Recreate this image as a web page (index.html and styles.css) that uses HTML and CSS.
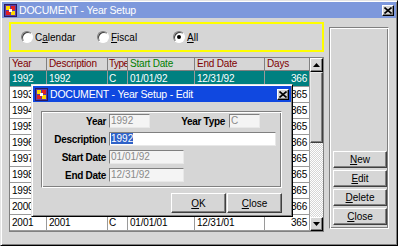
FILE: index.html
```html
<!DOCTYPE html>
<html lang="en">
<head>
    <meta charset="UTF-8">
    <title>DOCUMENT - Year Setup</title>
    <link rel="stylesheet" href="styles.css">
</head>
<body>
    <div class="window">
        <div class="titlebar inactive">
            <svg class="app-icon" width="13" height="13" viewBox="0 0 13 13">
                <rect x="0.5" y="0.5" width="12" height="12" fill="#5a3ca8" stroke="#2a1a60"/>
                <rect x="2" y="2" width="4" height="4" fill="#ffd800"/>
                <rect x="7" y="2" width="4" height="4" fill="#e02020"/>
                <rect x="2" y="7" width="4" height="4" fill="#e02020"/>
                <rect x="7" y="7" width="4" height="4" fill="#ffd800"/>
                <rect x="5" y="5" width="3" height="3" fill="#ffffff"/>
            </svg>
            <span class="title">DOCUMENT - Year Setup</span>
            <span class="close-btn">
                <svg width="8" height="7" viewBox="0 0 8 7"><path d="M0.5 0.5 L7.5 6.5 M7.5 0.5 L0.5 6.5" stroke="#000" stroke-width="1.6"/></svg>
            </span>
        </div>

        <div class="content">
            <div class="left">
                <div class="filter">
                    <div class="radio"><span class="circle"></span><span>C<u>a</u>lendar</span></div>
                    <div class="radio"><span class="circle"></span><span><u>F</u>iscal</span></div>
                    <div class="radio"><span class="circle checked"></span><span><u>A</u>ll</span></div>
                </div>

                <div class="grid-wrap">
                    <div class="grid">
                        <div class="cell head">Year</div>
                        <div class="cell head">Description</div>
                        <div class="cell head tight">Type</div>
                        <div class="cell head green">Start Date</div>
                        <div class="cell head">End Date</div>
                        <div class="cell head">Days</div>

                        <div class="cell sel">1992</div><div class="cell sel">1992</div><div class="cell sel tight">C</div><div class="cell sel">01/01/92</div><div class="cell sel">12/31/92</div><div class="cell sel num">366</div>
                        <div class="cell">1993</div><div class="cell">1993</div><div class="cell tight">C</div><div class="cell">01/01/93</div><div class="cell">12/31/93</div><div class="cell num">365</div>
                        <div class="cell">1994</div><div class="cell">1994</div><div class="cell tight">C</div><div class="cell">01/01/94</div><div class="cell">12/31/94</div><div class="cell num">365</div>
                        <div class="cell">1995</div><div class="cell">1995</div><div class="cell tight">C</div><div class="cell">01/01/95</div><div class="cell">12/31/95</div><div class="cell num">365</div>
                        <div class="cell">1996</div><div class="cell">1996</div><div class="cell tight">C</div><div class="cell">01/01/96</div><div class="cell">12/31/96</div><div class="cell num">366</div>
                        <div class="cell">1997</div><div class="cell">1997</div><div class="cell tight">C</div><div class="cell">01/01/97</div><div class="cell">12/31/97</div><div class="cell num">365</div>
                        <div class="cell">1998</div><div class="cell">1998</div><div class="cell tight">C</div><div class="cell">01/01/98</div><div class="cell">12/31/98</div><div class="cell num">365</div>
                        <div class="cell">1999</div><div class="cell">1999</div><div class="cell tight">C</div><div class="cell">01/01/99</div><div class="cell">12/31/99</div><div class="cell num">365</div>
                        <div class="cell">2000</div><div class="cell">2000</div><div class="cell tight">C</div><div class="cell">01/01/00</div><div class="cell">12/31/00</div><div class="cell num">366</div>
                        <div class="cell">2001</div><div class="cell">2001</div><div class="cell tight">C</div><div class="cell">01/01/01</div><div class="cell">12/31/01</div><div class="cell num">365</div>
                    </div>
                    <div class="scrollbar">
                        <div class="sb-btn"><svg width="7" height="4" viewBox="0 0 7 4"><path d="M3.5 0 L7 4 L0 4 Z" fill="#000"/></svg></div>
                        <div class="sb-thumb"></div>
                        <div class="sb-track"></div>
                        <div class="sb-btn"><svg width="7" height="4" viewBox="0 0 7 4"><path d="M0 0 L7 0 L3.5 4 Z" fill="#000"/></svg></div>
                    </div>
                </div>
            </div>

            <div class="side">
                <button class="btn"><u>N</u>ew</button>
                <button class="btn"><u>E</u>dit</button>
                <button class="btn"><u>D</u>elete</button>
                <button class="btn"><u>C</u>lose</button>
            </div>
        </div>

        <div class="dialog">
            <div class="titlebar active">
                <svg class="app-icon" width="13" height="13" viewBox="0 0 13 13">
                    <rect x="0.5" y="0.5" width="12" height="12" fill="#5a3ca8" stroke="#2a1a60"/>
                    <rect x="2" y="2" width="4" height="4" fill="#ffd800"/>
                    <rect x="7" y="2" width="4" height="4" fill="#e02020"/>
                    <rect x="2" y="7" width="4" height="4" fill="#e02020"/>
                    <rect x="7" y="7" width="4" height="4" fill="#ffd800"/>
                    <rect x="5" y="5" width="3" height="3" fill="#ffffff"/>
                </svg>
                <span class="title">DOCUMENT - Year Setup - Edit</span>
                <span class="close-btn">
                    <svg width="8" height="7" viewBox="0 0 8 7"><path d="M0.5 0.5 L7.5 6.5 M7.5 0.5 L0.5 6.5" stroke="#000" stroke-width="1.6"/></svg>
                </span>
            </div>
            <div class="dialog-body">
                <div class="group">
                    <div class="field">
                        <span class="label">Year</span>
                        <span class="input w-year disabled">1992</span>
                        <span class="label type-label">Year Type</span>
                        <span class="input w-type disabled">C</span>
                    </div>
                    <div class="field">
                        <span class="label">Description</span>
                        <span class="input w-desc"><span class="selected">1992</span></span>
                    </div>
                    <div class="field">
                        <span class="label">Start Date</span>
                        <span class="input w-date disabled">01/01/92</span>
                    </div>
                    <div class="field">
                        <span class="label">End Date</span>
                        <span class="input w-date disabled">12/31/92</span>
                    </div>
                </div>
                <div class="dialog-buttons">
                    <button class="btn wide"><u>O</u>K</button>
                    <button class="btn wide"><u>C</u>lose</button>
                </div>
            </div>
        </div>
    </div>
</body>
</html>
```

FILE: styles.css
```css
* {
    box-sizing: border-box;
}

body {
    margin: 0;
    font-family: "Liberation Sans", Arial, sans-serif;
    font-size: 10px;
    color: #000;
    background: #d6d6d6;
}

.window {
    position: relative;
    width: 398px;
    height: 246px;
    background: #d6d6d6;
    border: 1px solid;
    border-color: #e4e4e4 #000 #000 #e4e4e4;
    box-shadow: inset 1px 1px #fff, inset -1px -1px #808080;
    padding: 1px;
}

.titlebar {
    height: 16px;
    display: flex;
    align-items: center;
    padding: 0 2px;
    gap: 2px;
    color: #fff;
    font-size: 10.5px;
    letter-spacing: -0.2px;
}

.titlebar.inactive {
    background: #7d98dc;
}

.titlebar.active {
    background: #1048e0;
}

.app-icon {
    flex: none;
}

.close-btn {
    margin-left: auto;
    width: 12px;
    height: 11px;
    background: #d6d6d6;
    border: 1px solid;
    border-color: #fff #000 #000 #fff;
    box-shadow: inset -1px -1px #808080;
    display: flex;
    align-items: center;
    justify-content: center;
}

.content {
    display: flex;
    padding-left: 7px;
}

.left {
    width: 315px;
    padding-top: 4px;
}

.filter {
    height: 30px;
    border: 2px solid #ffff00;
    display: flex;
    align-items: center;
    padding-left: 10px;
}

.radio {
    width: 76px;
    display: flex;
    align-items: center;
    gap: 2px;
}

.circle {
    width: 12px;
    height: 12px;
    border-radius: 50%;
    background: #fff;
    border: 1px solid;
    border-color: #808080 #fff #fff #808080;
    box-shadow: inset 1px 1px #404040;
    position: relative;
}

.circle.checked::after {
    content: "";
    position: absolute;
    left: 3px;
    top: 3px;
    width: 4px;
    height: 4px;
    border-radius: 50%;
    background: #000;
}

.grid-wrap {
    margin-top: 5px;
    height: 175px;
    display: flex;
    border: 1px solid #808080;
    background: #fff;
}

.grid {
    width: 300px;
    display: grid;
    grid-template-columns: 37px 61px 20px 67px 70px 45px;
    grid-template-rows: 13px repeat(10, 16px);
    align-content: start;
}

.cell {
    border-right: 1px solid #9a9a9a;
    border-bottom: 1px solid #9a9a9a;
    padding: 0 2px;
    line-height: 15px;
    white-space: nowrap;
    overflow: hidden;
    letter-spacing: -0.2px;
}

.cell.tight {
    padding: 0 0 0 1px;
    letter-spacing: -0.5px;
}

.cell.head {
    background: #d6d6d6;
    color: #800000;
    line-height: 12px;
    border-color: #808080;
}

.cell.head.green {
    color: #008000;
}

.cell.sel {
    background: #008080;
    color: #fff;
}

.cell.num {
    text-align: right;
}

.scrollbar {
    width: 14px;
    display: flex;
    flex-direction: column;
}

.sb-btn {
    height: 14px;
    background: #d6d6d6;
    border: 1px solid;
    border-color: #fff #000 #000 #fff;
    box-shadow: inset -1px -1px #808080;
    display: flex;
    align-items: center;
    justify-content: center;
}

.sb-thumb {
    height: 71px;
    background: #d6d6d6;
    border: 1px solid;
    border-color: #e8e8e8 #404040 #404040 #e8e8e8;
    box-shadow: inset -1px -1px #808080;
}

.sb-track {
    flex: 1;
    background: repeating-conic-gradient(#fff 0 25%, #d6d6d6 0 50%) 0 0 / 2px 2px;
}

.side {
    width: 60px;
    height: 202px;
    margin: 9px 0 0 5px;
    border: 1px solid;
    border-color: #808080 #fff #fff #808080;
    box-shadow: inset 1px 1px #fff, inset -1px -1px #808080;
    display: flex;
    flex-direction: column;
    justify-content: flex-end;
    gap: 2px;
    padding: 0 0 3px 3px;
}

.btn {
    font-family: "Liberation Sans", Arial, sans-serif;
    font-size: 10px;
    color: #000;
    background: #d6d6d6;
    border: 1px solid;
    border-color: #fff #404040 #404040 #fff;
    box-shadow: inset -1px -1px #808080;
    padding: 0;
    width: 54px;
    height: 17px;
}

.btn.wide {
    width: 55px;
    height: 20px;
}

.dialog {
    position: absolute;
    left: 30px;
    top: 83px;
    width: 262px;
    height: 133px;
    background: #d6d6d6;
    border: 1px solid;
    border-color: #e4e4e4 #000 #000 #e4e4e4;
    box-shadow: inset 1px 1px #fff, inset -1px -1px #808080;
    padding: 1px;
}

.dialog-body {
    padding: 9px 8px 0 8px;
}

.group {
    width: 241px;
    height: 77px;
    border: 1px solid;
    border-color: #808080 #fff #fff #808080;
    box-shadow: inset 1px 1px #fff, inset -1px -1px #808080;
    padding-top: 2px;
    display: flex;
    flex-direction: column;
    gap: 4px;
}

.field {
    display: flex;
    align-items: center;
    height: 14px;
}

.label {
    width: 64px;
    margin-right: 3px;
    text-align: right;
    font-weight: bold;
    letter-spacing: -0.3px;
    white-space: nowrap;
}

.label.type-label {
    width: 75px;
    margin-right: 4px;
}

.input {
    height: 14px;
    background: #fff;
    border: 1px solid;
    border-color: #808080 #e8e8e8 #e8e8e8 #808080;
    padding-left: 1px;
    line-height: 12px;
    white-space: nowrap;
}

.input.disabled {
    background: #f4f4f4;
    color: #8a8a8a;
}

.w-year {
    width: 41px;
}

.w-type {
    width: 31px;
}

.w-desc {
    width: 167px;
}

.w-date {
    width: 75px;
}

.selected {
    background: #2f62c8;
    color: #fff;
}

.dialog-buttons {
    display: flex;
    justify-content: flex-end;
    gap: 1px;
    width: 241px;
    margin-top: 5px;
}
```
